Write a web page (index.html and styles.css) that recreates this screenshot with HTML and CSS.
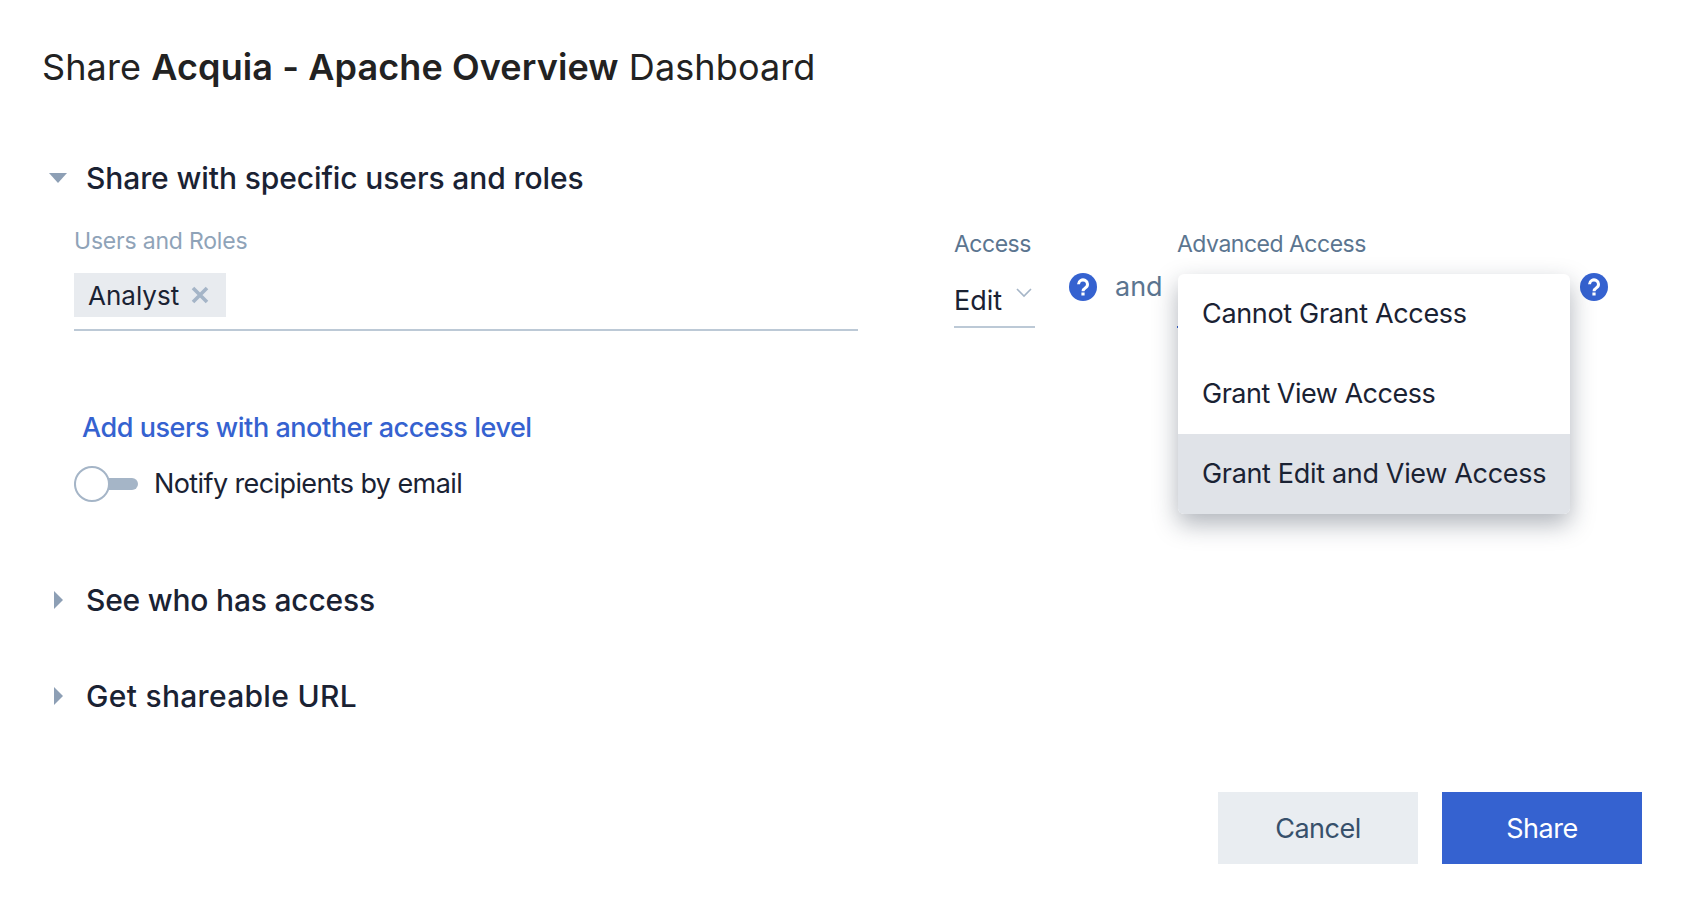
FILE: index.html
```html
<!DOCTYPE html>
<html lang="en">
<head>
    <meta charset="UTF-8">
    <title>Share Dashboard</title>
    <link rel="stylesheet" href="styles.css">
</head>
<body>
    <div class="dialog">
        <h1 class="title">Share <b>Acquia - Apache Overview</b> Dashboard</h1>

        <h2 class="section first"><span class="caret-down"></span>Share with specific users and roles</h2>

        <div class="share-row">
            <div class="users-col">
                <div class="label light">Users and Roles</div>
                <div class="users-input">
                    <span class="chip">Analyst
                        <svg class="chip-x" width="18" height="18" viewBox="0 0 18 18"><path d="M2 2l14 14M16 2L2 16" stroke="#a5b5c7" stroke-width="3.6" fill="none"/></svg>
                    </span>
                </div>
            </div>
            <div class="access-col">
                <div class="label">Access</div>
                <div class="select">Edit
                    <svg class="chev" width="16" height="10" viewBox="0 0 16 10"><path d="M1 1l7 7 7-7" stroke="#a5b5c7" stroke-width="1.6" fill="none"/></svg>
                </div>
            </div>
            <svg class="help" width="28" height="28" viewBox="0 0 28 28"><circle cx="14" cy="14" r="14" fill="#3562d0"/><path d="M9.500 11.200a4.500 4.300 0 1 1 7 3.600c-1.800 1.200-2.500 1.800-2.500 3.400" stroke="#fff" stroke-width="3" fill="none"/><rect x="12.400" y="19.500" width="3.200" height="3" fill="#fff"/></svg>
            <span class="and">and</span>
            <div class="advanced-col">
                <div class="label">Advanced Access</div>
                <div class="select focused"></div>
                <ul class="menu">
                    <li>Cannot Grant Access</li>
                    <li class="tight">Grant View Access</li>
                    <li class="active">Grant Edit and View Access</li>
                </ul>
            </div>
            <svg class="help" width="28" height="28" viewBox="0 0 28 28"><circle cx="14" cy="14" r="14" fill="#3562d0"/><path d="M9.500 11.200a4.500 4.300 0 1 1 7 3.600c-1.800 1.200-2.500 1.800-2.500 3.400" stroke="#fff" stroke-width="3" fill="none"/><rect x="12.400" y="19.500" width="3.200" height="3" fill="#fff"/></svg>
        </div>

        <a class="add-link">Add users with another access level</a>

        <div class="notify">
            <span class="toggle"><span class="knob"></span></span>
            Notify recipients by email
        </div>

        <h2 class="section"><span class="caret-right"></span>See who has access</h2>
        <h2 class="section url"><span class="caret-right"></span>Get shareable URL</h2>

        <div class="actions">
            <button class="btn cancel">Cancel</button>
            <button class="btn share">Share</button>
        </div>
    </div>
</body>
</html>
```

FILE: styles.css
```css
body {
    margin: 0;
    background-color: #fff;
    font-family: Inter, "Liberation Sans", sans-serif;
    color: #1a2233;
}
.dialog {
    height: 908px;
    box-sizing: border-box;
    padding: 44px 42px 0 42px;
    display: flex;
    flex-direction: column;
}
.title {
    margin: 0;
    font-size: 36px;
    line-height: 46px;
    font-weight: 400;
    letter-spacing: 0.1px;
    color: #222;
}
.title b {
    font-weight: 600;
}
.section {
    margin: 0;
    display: flex;
    align-items: center;
    font-size: 30px;
    line-height: 40px;
    font-weight: 500;
    letter-spacing: -0.2px;
    padding-left: 44px;
    position: relative;
    margin-top: 56px;
}
.section.first {
    margin-top: 68px;
    letter-spacing: -0.1px;
}
.section.url {
    letter-spacing: 0.3px;
}
.caret-down {
    position: absolute;
    left: 7px;
    top: 15px;
    border-left: 9px solid transparent;
    border-right: 9px solid transparent;
    border-top: 10px solid #8d9fb5;
}
.caret-right {
    position: absolute;
    left: 12px;
    top: 11px;
    border-top: 9px solid transparent;
    border-bottom: 9px solid transparent;
    border-left: 9px solid #8d9fb5;
}
.share-row {
    display: flex;
    align-items: flex-start;
    padding-left: 32px;
    margin-top: 28px;
}
.label {
    font-size: 23px;
    line-height: 30px;
    letter-spacing: -0.5px;
    color: #5b7590;
}
.label.light {
    letter-spacing: -0.2px;
    color: #8fa3b8;
}
.users-col {
    width: 784px;
    margin-right: 96px;
}
.users-input {
    margin-top: 17px;
    padding-bottom: 12px;
    border-bottom: 2px solid #bcc9d6;
}
.chip {
    display: inline-flex;
    align-items: center;
    height: 44px;
    padding: 0 17px 0 14px;
    background-color: #e8ebef;
    font-size: 26px;
}
.chip-x {
    margin-left: 12px;
}
.access-col {
    width: 81px;
    margin-top: 3px;
}
.select {
    position: relative;
    height: 56px;
    line-height: 62px;
    font-size: 27px;
    margin-top: 11px;
    border-bottom: 2px solid #bcc9d6;
}
.select.focused {
    border-bottom-color: #3562d0;
}
.chev {
    position: absolute;
    right: 3px;
    top: 18px;
}
.help {
    margin-top: 47px;
    margin-left: 34px;
    flex: none;
}
.and {
    margin-top: 43px;
    margin-left: 18px;
    width: 62px;
    font-size: 27px;
    line-height: 36px;
    color: #5b7590;
}
.advanced-col {
    position: relative;
    width: 393px;
    margin-top: 3px;
}
.advanced-col + .help {
    margin-left: 10px;
}
.menu {
    position: absolute;
    left: 1px;
    top: 45px;
    width: 392px;
    margin: 0;
    padding: 0;
    list-style: none;
    background-color: #fff;
    border-radius: 6px;
    overflow: hidden;
    box-shadow: 0 10px 24px rgba(30, 40, 60, 0.35);
}
.menu li {
    height: 80px;
    line-height: 80px;
    padding-left: 24px;
    font-size: 27px;
    letter-spacing: -0.33px;
    white-space: nowrap;
}
.menu li.tight {
    letter-spacing: -0.5px;
}
.menu li.active {
    background-color: #e0e3e8;
}
.add-link {
    margin-top: 79px;
    margin-left: 40px;
    font-size: 27px;
    line-height: 36px;
    font-weight: 500;
    letter-spacing: -0.45px;
    color: #3562d0;
}
.notify {
    display: flex;
    align-items: center;
    margin-top: 19px;
    margin-bottom: 21px;
    margin-left: 32px;
    font-size: 27px;
    line-height: 38px;
    letter-spacing: -0.6px;
}
.toggle {
    position: relative;
    width: 64px;
    height: 12px;
    margin-right: 16px;
    background-color: #a5b5c7;
    border-radius: 6px;
}
.knob {
    position: absolute;
    left: 0;
    top: -12px;
    width: 32px;
    height: 32px;
    background-color: #fff;
    border: 2px solid #a5b5c7;
    border-radius: 50%;
}
.actions {
    display: flex;
    justify-content: flex-end;
    gap: 24px;
    margin-top: 76px;
}
.btn {
    width: 200px;
    height: 72px;
    border: none;
    font-family: inherit;
    font-size: 27px;
    letter-spacing: -0.5px;
}
.cancel {
    background-color: #e9edf1;
    color: #37506b;
}
.share {
    background-color: #3562d0;
    color: #fff;
}
```
